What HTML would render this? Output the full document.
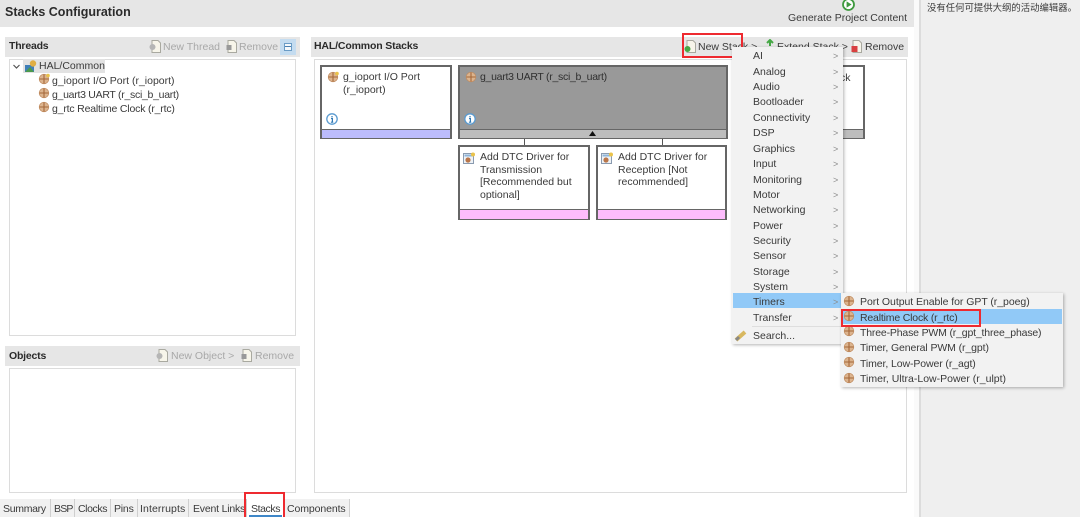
<!DOCTYPE html>
<html><head><meta charset="utf-8">
<style>
html,body{margin:0;padding:0;width:1080px;height:517px;overflow:hidden;background:#fff;}
body{position:relative;font-family:"Liberation Sans","Noto Sans CJK SC",sans-serif;font-size:10.5px;color:#3a3a3a;}
div,span,svg{position:absolute;}
svg{filter:blur(.3px);}
.t{white-space:nowrap;line-height:14px;filter:blur(.3px);}
.b{font-weight:bold;color:#2b2b2b;}
.g{color:#a8a8a8;}
.hdr{background:#e6e6e6;}
.box{background:#fff;border:1px solid #dcdcdc;box-sizing:border-box;}
.card{background:#fff;border:2px solid #666;box-sizing:border-box;}
.m{left:753px;}
.ar{left:833px;color:#8a8a8a;font-size:9px;}
.red{border:2px solid #ee2a30;box-sizing:border-box;}
.tab{top:499px;height:18px;background:#f1f1f1;border-right:1px solid #cfcfcf;box-sizing:border-box;}
</style></head><body>
<svg width="0" height="0" style="left:0;top:0"><defs>
<g id="ball"><circle cx="6" cy="6" r="4.8" fill="#dcb48e"/><path d="M1 6H11M6 1V11" stroke="#a5683a" stroke-width="1.1"/><circle cx="6" cy="6" r="4.8" fill="none" stroke="#c08c60" stroke-width=".7"/></g>
<g id="info"><circle cx="6" cy="6" r="5.2" fill="#fff" stroke="#5b9bd0" stroke-width="1.3"/><path d="M6 3V4.2M5 5.5H6.4V9M4.9 9.2H7.3" stroke="#2f78b5" stroke-width="1.2" fill="none"/></g>
<g id="drv"><rect x=".5" y="1.5" width="10" height="10" fill="#eef2f6" stroke="#8a9bb0"/><rect x="1.5" y="2.5" width="8" height="2" fill="#8fb4d8"/><circle cx="5" cy="8" r="2.6" fill="#b9764a"/><circle cx="10" cy="2.5" r="2" fill="#eac34a"/></g>
<g id="doc"><path d="M3 .5H9L11.5 3V12.5H3Z" fill="#f7f5ea" stroke="#a9a9a0"/></g>
</defs></svg>

<!-- top header -->
<div class="hdr" style="left:0;top:0;width:914px;height:27px;"></div>
<div class="t b" style="left:5px;top:4px;font-size:12.5px;line-height:17px;">Stacks Configuration</div>
<svg style="left:842px;top:-2px" width="13" height="13"><circle cx="6.5" cy="6.5" r="5.5" fill="#fff" stroke="#3f9a3f" stroke-width="1.8"/><path d="M4.6 3.4L9.6 6.5L4.6 9.6Z" fill="#3f9a3f"/></svg>
<div class="t" style="left:788px;top:11px;">Generate Project Content</div>

<!-- right panel -->
<div style="left:914px;top:0;width:5px;height:517px;background:#fafafa;"></div>
<div style="left:919px;top:0;width:2px;height:517px;background:#dcdcdc;"></div>
<div style="left:921px;top:0;width:159px;height:517px;background:#efefef;"></div>
<div class="t" style="left:927px;top:1px;font-size:9.4px;">没有任何可提供大纲的活动编辑器。</div>

<!-- threads -->
<div class="hdr" style="left:5px;top:37px;width:295px;height:20px;"></div>
<div class="t b" style="left:9px;top:39px;letter-spacing:-.2px;">Threads</div>
<svg style="left:149px;top:40px" width="14" height="14"><use href="#doc"/><circle cx="3.5" cy="7" r="3" fill="#b5b5b5"/></svg>
<div class="t g" style="left:163px;top:40px;">New Thread</div>
<svg style="left:225px;top:40px" width="14" height="14"><use href="#doc"/><rect x="1.5" y="5" width="5" height="5" fill="#999"/></svg>
<div class="t g" style="left:239px;top:40px;">Remove</div>
<div style="left:280px;top:39px;width:16px;height:16px;background:#c4dcf0;"></div>
<div style="left:284px;top:43px;width:8px;height:8px;border:1px solid #6a9cc6;background:#f4f8fb;box-sizing:border-box;"></div>
<div style="left:285px;top:46px;width:6px;height:1px;background:#4a7fb0;"></div>
<div class="box" style="left:9px;top:59px;width:287px;height:277px;"></div>
<svg style="left:12px;top:62px" width="9" height="9"><path d="M1.5 3L4.5 6L7.5 3" stroke="#555" stroke-width="1.2" fill="none"/></svg>
<div style="left:23px;top:59px;width:82px;height:14px;background:#e2e2e2;"></div>
<svg style="left:24px;top:59px" width="14" height="14"><rect x="1" y="6" width="9" height="7" fill="#3f7fb8"/><path d="M1 13L6 8L10 13Z" fill="#4c9a4c"/><circle cx="9" cy="4.5" r="3.2" fill="#e0ae44"/></svg>
<div class="t" style="left:39px;top:59px;">HAL/Common</div>
<svg style="left:38px;top:73px" width="12" height="12"><use href="#ball"/><circle cx="10" cy="2.5" r="1.8" fill="#eac34a"/></svg>
<div class="t" style="left:52px;top:74px;">g_ioport I/O Port (r_ioport)</div>
<svg style="left:38px;top:87px" width="12" height="12"><use href="#ball"/></svg>
<div class="t" style="left:52px;top:88px;letter-spacing:-.28px;">g_uart3 UART (r_sci_b_uart)</div>
<svg style="left:38px;top:101px" width="12" height="12"><use href="#ball"/></svg>
<div class="t" style="left:52px;top:102px;letter-spacing:-.18px;">g_rtc Realtime Clock (r_rtc)</div>

<!-- objects -->
<div class="hdr" style="left:5px;top:346px;width:295px;height:20px;"></div>
<div class="t b" style="left:9px;top:349px;letter-spacing:-.2px;">Objects</div>
<svg style="left:156px;top:349px" width="14" height="14"><use href="#doc"/><circle cx="3.5" cy="7" r="3" fill="#b5b5b5"/></svg>
<div class="t g" style="left:171px;top:349px;">New Object &gt;</div>
<svg style="left:240px;top:349px" width="14" height="14"><use href="#doc"/><rect x="1.5" y="5" width="5" height="5" fill="#999"/></svg>
<div class="t g" style="left:255px;top:349px;">Remove</div>
<div class="box" style="left:9px;top:368px;width:287px;height:125px;"></div>

<!-- stacks -->
<div class="hdr" style="left:311px;top:37px;width:597px;height:20px;"></div>
<div class="t b" style="left:314px;top:39px;letter-spacing:-.15px;">HAL/Common Stacks</div>
<div class="box" style="left:314px;top:59px;width:593px;height:434px;"></div>

<svg style="left:684px;top:40px" width="14" height="14"><use href="#doc"/><circle cx="3.5" cy="9" r="3" fill="#45a845"/></svg>
<div class="t" style="left:698px;top:40px;">New Stack &gt;</div>
<svg style="left:764px;top:39px" width="12" height="14"><path d="M6 1V7M3 4L6 1L9 4" stroke="#45a845" stroke-width="2" fill="none"/></svg>
<div class="t" style="left:777px;top:40px;">Extend Stack &gt;</div>
<svg style="left:850px;top:40px" width="14" height="14"><use href="#doc"/><rect x="1.5" y="6" width="6" height="6" fill="#d84040"/></svg>
<div class="t" style="left:865px;top:40px;">Remove</div>

<!-- cards -->
<div class="card" style="left:320px;top:65px;width:132px;height:74px;"></div>
<div style="left:322px;top:129px;width:128px;height:8px;background:#bcbcfc;border-top:1px solid #666;"></div>
<svg style="left:327px;top:71px" width="12" height="12"><use href="#ball"/><circle cx="10" cy="2.5" r="1.8" fill="#eac34a"/></svg>
<div class="t" style="left:343px;top:71px;line-height:13px;">g_ioport I/O Port<br>(r_ioport)</div>
<svg style="left:326px;top:113px" width="12" height="12"><use href="#info"/></svg>

<div class="card" style="left:458px;top:65px;width:270px;height:74px;background:#999;"></div>
<div style="left:460px;top:129px;width:266px;height:8px;background:#bdbdbd;border-top:1px solid #666;"></div>
<svg style="left:589px;top:131px" width="7" height="6"><path d="M0 5L3.5 0L7 5Z" fill="#111"/></svg>
<svg style="left:465px;top:71px" width="12" height="12"><use href="#ball"/></svg>
<div class="t" style="left:480px;top:71px;line-height:13px;letter-spacing:-.28px;color:#2f2f2f;">g_uart3 UART (r_sci_b_uart)</div>
<svg style="left:464px;top:113px" width="12" height="12"><use href="#info"/></svg>

<div class="card" style="left:734px;top:65px;width:131px;height:74px;"></div>
<div style="left:736px;top:129px;width:127px;height:8px;background:#bdbdbd;border-top:1px solid #666;"></div>
<div class="t" style="left:840px;top:71px;">ck</div>

<div style="left:524px;top:139px;width:1px;height:6px;background:#555;"></div>
<div style="left:662px;top:139px;width:1px;height:6px;background:#555;"></div>

<div class="card" style="left:458px;top:145px;width:132px;height:75px;"></div>
<div style="left:460px;top:209px;width:128px;height:9px;background:#fdbcfc;border-top:1px solid #666;"></div>
<svg style="left:463px;top:152px" width="12" height="13"><use href="#drv"/></svg>
<div class="t" style="left:480px;top:151px;line-height:12.6px;">Add DTC Driver for<br>Transmission<br>[Recommended but<br>optional]</div>

<div class="card" style="left:596px;top:145px;width:131px;height:75px;"></div>
<div style="left:598px;top:209px;width:127px;height:9px;background:#fdbcfc;border-top:1px solid #666;"></div>
<svg style="left:601px;top:152px" width="12" height="13"><use href="#drv"/></svg>
<div class="t" style="left:618px;top:151px;line-height:12.6px;">Add DTC Driver for<br>Reception [Not<br>recommended]</div>

<!-- red box new stack -->
<div class="red" style="left:682px;top:33px;width:61px;height:25px;"></div>

<!-- main menu -->
<div style="left:732px;top:47px;width:111px;height:297px;background:#f2f2f2;box-shadow:1px 1px 3px rgba(0,0,0,.3);"></div>
<div style="left:733px;top:293px;width:110px;height:15px;background:#91c9f7;"></div>
<div style="left:752px;top:326px;width:90px;height:1px;background:#dedede;"></div>
<div class="t m" style="top:49px;">AI</div>
<div class="t m" style="top:65px;">Analog</div>
<div class="t m" style="top:80px;">Audio</div>
<div class="t m" style="top:95px;">Bootloader</div>
<div class="t m" style="top:111px;">Connectivity</div>
<div class="t m" style="top:126px;">DSP</div>
<div class="t m" style="top:142px;">Graphics</div>
<div class="t m" style="top:157px;">Input</div>
<div class="t m" style="top:173px;">Monitoring</div>
<div class="t m" style="top:188px;">Motor</div>
<div class="t m" style="top:203px;">Networking</div>
<div class="t m" style="top:219px;">Power</div>
<div class="t m" style="top:234px;">Security</div>
<div class="t m" style="top:249px;">Sensor</div>
<div class="t m" style="top:265px;">Storage</div>
<div class="t m" style="top:280px;">System</div>
<div class="t m" style="top:295px;">Timers</div>
<div class="t m" style="top:311px;">Transfer</div>
<div class="t m" style="top:329px;">Search...</div>
<div class="t ar" style="top:49px;">&gt;</div>
<div class="t ar" style="top:65px;">&gt;</div>
<div class="t ar" style="top:80px;">&gt;</div>
<div class="t ar" style="top:95px;">&gt;</div>
<div class="t ar" style="top:111px;">&gt;</div>
<div class="t ar" style="top:126px;">&gt;</div>
<div class="t ar" style="top:142px;">&gt;</div>
<div class="t ar" style="top:157px;">&gt;</div>
<div class="t ar" style="top:173px;">&gt;</div>
<div class="t ar" style="top:188px;">&gt;</div>
<div class="t ar" style="top:203px;">&gt;</div>
<div class="t ar" style="top:219px;">&gt;</div>
<div class="t ar" style="top:234px;">&gt;</div>
<div class="t ar" style="top:249px;">&gt;</div>
<div class="t ar" style="top:265px;">&gt;</div>
<div class="t ar" style="top:280px;">&gt;</div>
<div class="t ar" style="top:295px;">&gt;</div>
<div class="t ar" style="top:311px;">&gt;</div>
<svg style="left:734px;top:329px" width="14" height="13"><path d="M2 11L11 3" stroke="#d8b860" stroke-width="4"/><path d="M2 11L5 8" stroke="#888" stroke-width="3"/></svg>

<!-- submenu -->
<div style="left:841px;top:293px;width:222px;height:94px;background:#f2f2f2;box-shadow:1px 1px 3px rgba(0,0,0,.3);"></div>
<div style="left:842px;top:309px;width:220px;height:15px;background:#91c9f7;"></div>
<svg style="left:843px;top:295px" width="12" height="12"><use href="#ball"/></svg>
<svg style="left:843px;top:310px" width="12" height="12"><use href="#ball"/></svg>
<svg style="left:843px;top:325px" width="12" height="12"><use href="#ball"/></svg>
<svg style="left:843px;top:341px" width="12" height="12"><use href="#ball"/></svg>
<svg style="left:843px;top:356px" width="12" height="12"><use href="#ball"/></svg>
<svg style="left:843px;top:372px" width="12" height="12"><use href="#ball"/></svg>
<div class="t" style="left:860px;top:295px;letter-spacing:-.05px;">Port Output Enable for GPT (r_poeg)</div>
<div class="t" style="left:860px;top:311px;letter-spacing:-.18px;">Realtime Clock (r_rtc)</div>
<div class="t" style="left:860px;top:326px;letter-spacing:-.17px;">Three-Phase PWM (r_gpt_three_phase)</div>
<div class="t" style="left:860px;top:341px;letter-spacing:-.1px;">Timer, General PWM (r_gpt)</div>
<div class="t" style="left:860px;top:357px;letter-spacing:-.1px;">Timer, Low-Power (r_agt)</div>
<div class="t" style="left:860px;top:372px;">Timer, Ultra-Low-Power (r_ulpt)</div>
<div class="red" style="left:841px;top:309px;width:140px;height:18px;"></div>

<!-- tabs -->
<div class="tab" style="left:0;width:51px;"></div>
<div class="tab" style="left:51px;width:24px;"></div>
<div class="tab" style="left:75px;width:36px;"></div>
<div class="tab" style="left:111px;width:27px;"></div>
<div class="tab" style="left:138px;width:51px;"></div>
<div class="tab" style="left:189px;width:58px;"></div>
<div style="left:247px;top:499px;width:37px;height:18px;background:#fff;"></div>
<div style="left:249px;top:515px;width:33px;height:2px;background:#3f87c8;"></div>
<div class="tab" style="left:284px;width:66px;"></div>
<div class="t" style="left:3px;top:502px;letter-spacing:-.3px;">Summary</div>
<div class="t" style="left:54px;top:502px;letter-spacing:-.8px;">BSP</div>
<div class="t" style="left:78px;top:502px;letter-spacing:-.4px;">Clocks</div>
<div class="t" style="left:114px;top:502px;letter-spacing:-.2px;">Pins</div>
<div class="t" style="left:140px;top:502px;letter-spacing:.1px;">Interrupts</div>
<div class="t" style="left:193px;top:502px;letter-spacing:-.2px;">Event Links</div>
<div class="t" style="left:251px;top:502px;letter-spacing:-.4px;">Stacks</div>
<div class="t" style="left:287px;top:502px;letter-spacing:-.1px;">Components</div>
<div class="red" style="left:244px;top:492px;width:41px;height:27px;border-bottom:none;"></div>
</body></html>
